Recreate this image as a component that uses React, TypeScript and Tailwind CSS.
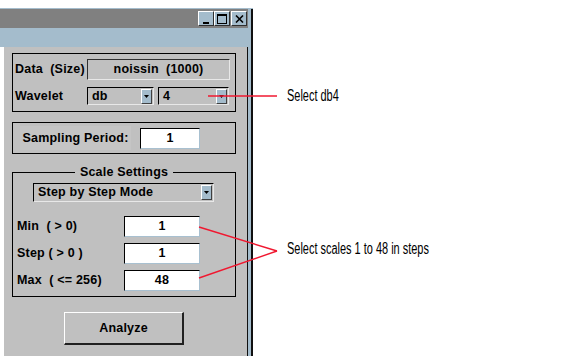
import React from 'react';

const field =
  'flex items-center justify-center bg-white border-t border-l border-t-black border-l-black border-r border-b border-r-[#a8c0d0] border-b-[#a8c0d0]';

function DropArrow() {
  return (
    <div className="w-[11px] h-[15px] bg-[#a4bccc] border-t border-l border-t-white border-l-white border-r border-b border-r-[#404040] border-b-[#404040] flex items-center justify-center mr-[1px]">
      <svg width="5" height="3" viewBox="0 0 5 3">
        <path d="M0 0H5L2.5 3Z" fill="#000" />
      </svg>
    </div>
  );
}

function Popup({ label, className }: { label: string; className: string }) {
  return (
    <div
      className={`flex items-center justify-between bg-[#c0c0c0] border-t border-l border-t-black border-l-black border-r border-b border-r-[#e8e8e8] border-b-[#e8e8e8] ${className}`}
    >
      <span className="pl-[4px]">{label}</span>
      <DropArrow />
    </div>
  );
}

function TitleButton({ children }: { children: React.ReactNode }) {
  return (
    <div className="w-[16px] h-[15px] bg-[#a4bccc] border-t border-l border-t-white border-l-white border-r border-b border-r-[#303030] border-b-[#303030] flex items-center justify-center">
      {children}
    </div>
  );
}

function ScaleRow({ label, value }: { label: string; value: string }) {
  return (
    <div className="flex items-center h-[21px]">
      <div className="w-[111px] pl-[4px] whitespace-pre">{label}</div>
      <div className={`${field} w-[76px] h-[21px]`}>{value}</div>
    </div>
  );
}

export default function App() {
  return (
    <div className="relative w-[582px] h-[356px] bg-white overflow-hidden font-['Liberation_Sans',Arial,sans-serif]">
      <div className="mt-[8px] w-[253px] h-[348px] flex flex-col">
        <div className="h-[1px] bg-[#a4bccc]" />
        <div className="flex">
          <div className="flex-1 flex flex-col">
            {/* title bar */}
            <div className="h-[19px] bg-[#808080] flex items-center justify-end pr-[1px] gap-[1px]">
              <div className="flex">
                <TitleButton>
                  <div className="w-[6px] h-[2px] bg-black mt-[8px]" />
                </TitleButton>
                <TitleButton>
                  <div className="w-[10px] h-[10px] border border-black border-t-2" />
                </TitleButton>
                <div className="w-[1px]" />
                <TitleButton>
                  <svg width="9" height="8" viewBox="0 0 9 8">
                    <path d="M1 0.5L8 7.5M8 0.5L1 7.5" stroke="#000" strokeWidth="1.6" />
                  </svg>
                </TitleButton>
              </div>
            </div>
            <div className="h-[19px] bg-[#a4bccc]" />
          </div>
          <div className="w-[5px] flex">
            <div className="w-[3px] bg-[#a4bccc]" />
            <div className="w-[2px] bg-[#101010]" />
          </div>
        </div>

        {/* body */}
        <div className="flex-1 flex">
          <div className="w-[4px] bg-white" />
          <div className="flex-1 bg-[#c0c0c0] pl-[8px] pt-[6px] text-[12.5px] font-bold text-black tracking-[0.2px]">
            {/* data / wavelet */}
            <div className="w-[224px] h-[59px] border border-black pt-[5px]">
              <div className="flex items-center h-[21px]">
                <div className="w-[74px] pl-[2px] whitespace-pre">Data  (Size)</div>
                <div className="w-[143px] h-[21px] flex items-center justify-center bg-[#c0c0c0] border-t border-l border-t-[#303030] border-l-[#303030] border-r border-b border-r-[#e8e8e8] border-b-[#e8e8e8] whitespace-pre">
                  noissin  (1000)
                </div>
              </div>
              <div className="flex items-center h-[18px] mt-[7px]">
                <div className="w-[74px] pl-[2px]">Wavelet</div>
                <Popup label="db" className="w-[67px] h-[18px]" />
                <Popup label="4" className="w-[71px] h-[18px] ml-[4px]" />
              </div>
            </div>

            {/* sampling period */}
            <div className="w-[224px] h-[32px] border border-black mt-[10px] flex items-center">
              <div className="ml-[7px] w-[111px] h-[24px] bg-[#c5c5c5] flex items-center justify-center">
                Sampling Period:
              </div>
              <div className={`${field} ml-[9px] w-[60px] h-[21px]`}>1</div>
            </div>

            {/* scale settings */}
            <div className="relative w-[224px] h-[125px] border border-black mt-[18px] pt-[10px]">
              <div className="absolute -top-[9px] left-0 right-0 flex justify-center">
                <span className="bg-[#c0c0c0] px-[5px] leading-[16px]">Scale Settings</span>
              </div>
              <Popup label="Step by Step Mode" className="ml-[20px] w-[181px] h-[19px]" />
              <div className="mt-[14px] flex flex-col gap-[6px]">
                <ScaleRow label="Min  ( > 0)" value="1" />
                <ScaleRow label="Step ( > 0 )" value="1" />
                <ScaleRow label="Max  ( <= 256)" value="48" />
              </div>
            </div>

            <div className="ml-[52px] mt-[15px] w-[120px] h-[33px] flex items-center justify-center bg-[#c0c0c0] border-t border-l border-t-white border-l-white border-r-2 border-b-2 border-r-[#202020] border-b-[#202020]">
              Analyze
            </div>
          </div>
          <div className="w-[6px] flex">
            <div className="w-[1px] bg-[#101010]" />
            <div className="w-[3px] bg-[#a4bccc]" />
            <div className="w-[2px] bg-[#101010]" />
          </div>
        </div>
      </div>

      {/* callouts */}
      <svg className="absolute inset-0 pointer-events-none" width="582" height="356">
        <line x1="208" y1="96" x2="277" y2="96" stroke="#f01830" strokeWidth="1.4" />
        <line x1="199" y1="227" x2="277" y2="251" stroke="#f01830" strokeWidth="1.4" />
        <line x1="199" y1="278" x2="277" y2="251" stroke="#f01830" strokeWidth="1.4" />
      </svg>
      <div className="absolute left-[287px] top-[86px] text-[16px] leading-[20px] text-black origin-left scale-x-[0.685] whitespace-nowrap">
        Select db4
      </div>
      <div className="absolute left-[287px] top-[239px] text-[16px] leading-[20px] text-black origin-left scale-x-[0.685] whitespace-nowrap">
        Select scales 1 to 48 in steps
      </div>
    </div>
  );
}
